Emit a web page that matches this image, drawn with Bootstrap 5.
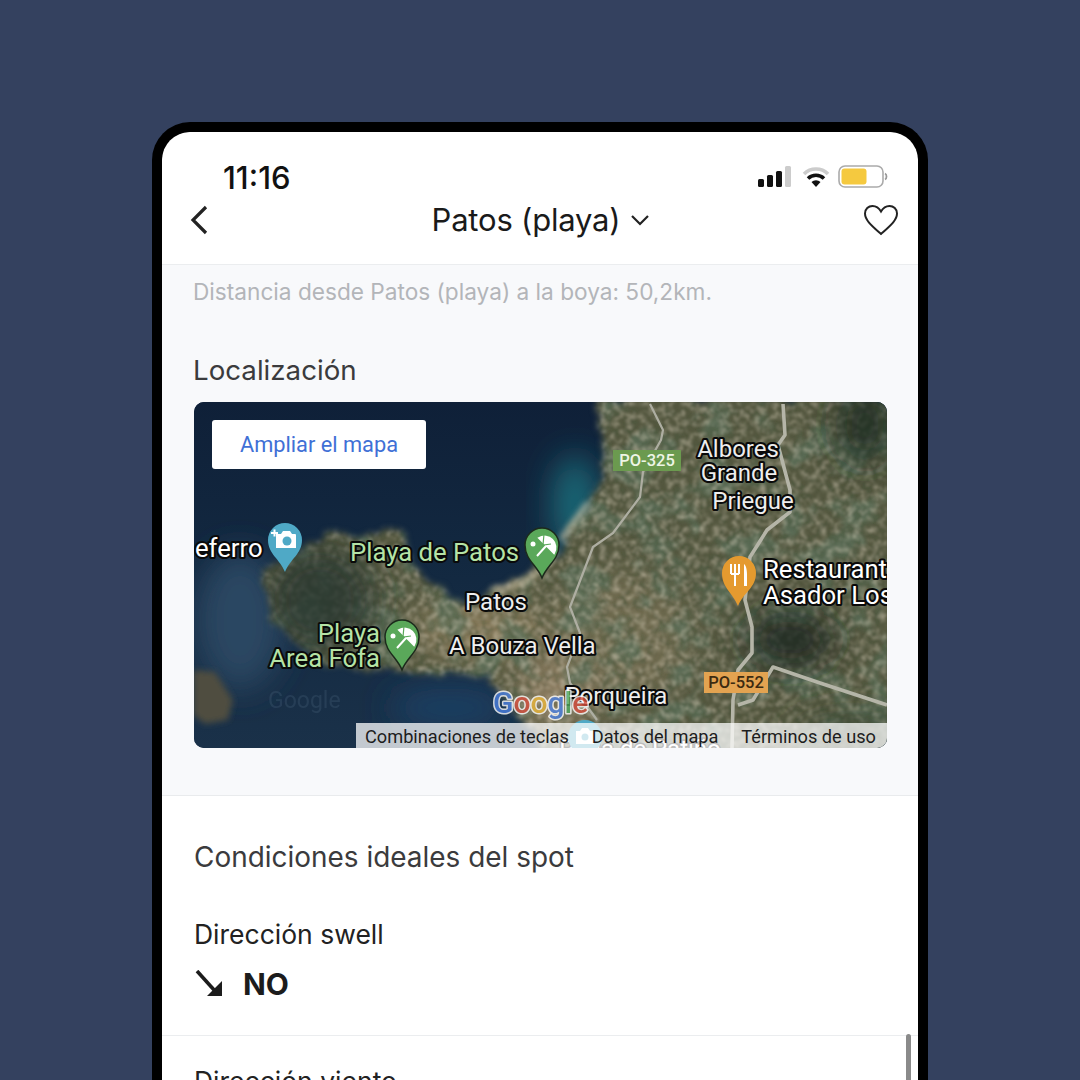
<!DOCTYPE html>
<html lang="es"><head><meta charset="utf-8"><title>Patos (playa)</title>
<link href="https://cdn.jsdelivr.net/npm/bootstrap@5.3.0/dist/css/bootstrap.min.css" rel="stylesheet">
<style>
html,body{height:1080px;overflow:hidden;background:#34415f}
body{font-family:Inter,"Liberation Sans",sans-serif;padding-top:122px}
.phone{width:776px;height:1000px;margin:0 auto;background:#000;border:10px solid #000;border-bottom:0;border-radius:38px 38px 0 0;overflow:hidden}
.screen{background:#fff;height:100%;border-radius:26px 26px 0 0;overflow:hidden;position:relative}
.statusline{height:55px;padding:24px 30px 0 61px}
.clock{font-size:31px;font-weight:500;line-height:44px;color:#111}
.navline{height:78px;padding:0 19px 12px 27px;border-bottom:1px solid #ebedef}
.navtitle{font-size:31px;line-height:44px;font-weight:400;color:#1a1a1a;letter-spacing:-.2px;gap:10px;margin-left:10px}
.greyzone{background:#f8f9fb;height:531px;padding:0 31px 0 32px;border-bottom:1px solid #e9ebed}
.distance{font-size:22.65px;line-height:54px;color:#b3b5b9;height:54px;margin-left:-1px}
.locate{font-size:27.7px;line-height:40px;color:#3b3b3d;margin-top:31px;margin-bottom:12px;font-weight:400;margin-left:-1px}
.mapbox{height:346px;border-radius:10px;overflow:hidden;position:relative;background:#14263d}
.mapbox svg{display:block}
.mapbtn{position:absolute;left:18px;top:18px;width:214px;height:49px;background:#fff;border-radius:3px;color:#3f70d6;font:400 21.8px/49px Roboto,sans-serif;padding:0;border:0;text-align:center}
.attrib{position:absolute;right:0;bottom:0;width:531px;height:25px;background:rgba(255,255,255,.74);font:400 18.2px/27px Roboto,sans-serif;color:#1d1d1d;padding:0 11px 0 9px;white-space:nowrap}
.sectitle{font-size:27.95px;line-height:40px;color:#3b3b3d;padding:41px 32px 0;margin:0;font-weight:400}
.factrow{padding:38px 32px 0;height:159px;border-bottom:1px solid #ebedef}
.factlabel{font-size:26.5px;line-height:38px;color:#222}
.factvalue{font-size:30px;font-weight:700;line-height:42px;color:#1c1c1c;gap:19px;margin-top:10px}
.factnext{padding:26px 32px 0}
.scrollthumb{position:absolute;right:7px;top:902px;width:5px;height:60px;background:#8a8a8a;border-radius:3px}
.maplabel{font-family:Roboto,sans-serif;font-size:25.7px;paint-order:stroke;stroke:#0a0a0a;stroke-width:4.2px;stroke-linejoin:round;fill:#fff}
.maplabel.green{fill:#b5e3a6}
.maplabel.village{font-size:24px;fill:#eee}
.shield{font-family:Roboto,sans-serif;font-size:16.5px;font-weight:500}
</style></head><body>
<div class="phone"><div class="screen">
  <div class="statusline d-flex justify-content-between align-items-start">
    <div class="clock">11:16</div>
    <svg width="130" height="26" viewBox="0 0 130 26" class="mt-2" aria-label="estado">
      <rect x="0" y="15" width="6" height="8" rx="1.5" fill="#111"/><rect x="9" y="11" width="6" height="12" rx="1.5" fill="#111"/><rect x="18" y="7" width="6" height="16" rx="1.5" fill="#111"/><rect x="27" y="2" width="6" height="21" rx="1.5" fill="#ccc"/>
      <path d="M46 10a17 17 0 0 1 24 0" fill="none" stroke="#ccc" stroke-width="3.6"/><path d="M50 14.5a11.5 11.5 0 0 1 16 0" fill="none" stroke="#111" stroke-width="3.6"/><path d="M53.5 18a6.5 6.5 0 0 1 9 0L58 23z" fill="#111"/>
      <rect x="81" y="2" width="44" height="21" rx="6" fill="#fff" stroke="#aaa" stroke-width="1.6"/><rect x="83.500" y="4.500" width="25" height="16" rx="3" fill="#f5c93f"/><path d="M127 9.500c2 1 2 5 0 6" fill="none" stroke="#999" stroke-width="1.800"/>
    </svg>
  </div>
  <div class="navline d-flex justify-content-between align-items-center">
    <svg width="20" height="30" viewBox="0 0 20 30" aria-label="Atrás"><path d="M17 2 4 15l13 13" fill="none" stroke="#222" stroke-width="3.200"/></svg>
    <div class="navtitle d-flex align-items-center">Patos (playa)
      <svg width="20" height="12" viewBox="0 0 20 12"><path d="m2 2 8 8 8-8" fill="none" stroke="#222" stroke-width="2.200"/></svg></div>
    <svg width="36" height="32" viewBox="0 0 36 32" aria-label="Favorito"><path d="M18 30C8 21 2 16 2 9.500 2 5 5.500 2 9.500 2c3.500 0 6.500 2 8.500 5.500C20 4 23 2 26.500 2 30.500 2 34 5 34 9.500 34 16 28 21 18 30z" fill="none" stroke="#222" stroke-width="2"/></svg>
  </div>
  <div class="greyzone">
    <div class="distance">Distancia desde Patos (playa) a la boya: 50,2km.</div>
    <div class="locate">Localización</div>
    <div class="mapbox">
      <svg width="693" height="346" viewBox="194 402 693 346" role="img" aria-label="Mapa de satélite">
        <defs>
          <filter id="coast" x="-5%" y="-5%" width="110%" height="110%"><feTurbulence type="fractalNoise" baseFrequency=".035" numOctaves="4" seed="3" result="warp"/><feDisplacementMap in="SourceGraphic" in2="warp" scale="30" xChannelSelector="R" yChannelSelector="G"/><feGaussianBlur stdDeviation="3"/></filter>
          <filter id="grain" x="0" y="0" width="100%" height="100%"><feTurbulence type="fractalNoise" baseFrequency=".11" numOctaves="4" seed="7"/><feColorMatrix values="0 0 0 0 .07  0 0 0 0 .10  0 0 0 0 .05  2.6 0 0 0 -1.05"/><feGaussianBlur stdDeviation="1" result="dark"/><feTurbulence type="fractalNoise" baseFrequency=".15" numOctaves="3" seed="21"/><feColorMatrix values="0 0 0 0 .78  0 0 0 0 .70  0 0 0 0 .56  2.4 0 0 0 -1.1"/><feGaussianBlur stdDeviation="1" result="light"/><feMerge><feMergeNode in="dark"/><feMergeNode in="light"/></feMerge></filter>
          <filter id="blotch" x="0" y="0" width="100%" height="100%"><feTurbulence type="fractalNoise" baseFrequency=".03" numOctaves="4" seed="12"/><feColorMatrix values="0 0 0 0 .10  0 0 0 0 .16  0 0 0 0 .10  5 0 0 0 -2.35"/><feGaussianBlur stdDeviation="1.5"/></filter>
          <filter id="soft" x="-30%" y="-30%" width="160%" height="160%"><feGaussianBlur stdDeviation="3"/></filter>
          <filter id="soft2" x="-60%" y="-60%" width="220%" height="220%"><feGaussianBlur stdDeviation="16"/></filter>
          <linearGradient id="seaG" x1="0" y1="0" x2="0" y2="1"><stop offset="0" stop-color="#0f2038"/><stop offset=".45" stop-color="#122840"/><stop offset="1" stop-color="#1a3149"/></linearGradient>
          <mask id="landmask" maskUnits="userSpaceOnUse" x="194" y="402" width="693" height="346"><path filter="url(#coast)" fill="#fff" d="M597 396 603 477 590 500 565 540 540 567 523 580 483 597 450 600 423 573 403 533 333 533 263 567 262 607 290 640 323 667 377 677 417 673 457 670 490 677 507 700 523 723 540 760H900V396z"/></mask>
        </defs>
        <rect x="194" y="402" width="693" height="346" fill="url(#seaG)"/>
        <ellipse cx="575" cy="505" rx="22" ry="50" fill="#1a6a78" filter="url(#soft2)"/>
        <ellipse cx="240" cy="620" rx="45" ry="70" fill="#2b4762" filter="url(#soft2)"/>
        <ellipse cx="450" cy="708" rx="60" ry="20" fill="#1c3f63" filter="url(#soft2)"/>
        <path d="M193 670 215 672 233 700 228 720 205 724 193 715z" fill="#4f4e3f" filter="url(#soft)"/>
        <g mask="url(#landmask)">
          <rect x="194" y="402" width="693" height="346" fill="#54573f"/>
          <ellipse cx="480" cy="630" rx="70" ry="28" fill="#92815f" opacity=".8" filter="url(#soft2)"/>
          <ellipse cx="620" cy="640" rx="70" ry="70" fill="#83785a" opacity=".55" filter="url(#soft2)"/>
          <ellipse cx="555" cy="695" rx="40" ry="40" fill="#9c876a" opacity=".75" filter="url(#soft2)"/>
          <rect x="194" y="402" width="693" height="346" filter="url(#blotch)" opacity=".75"/>
          <rect x="194" y="402" width="693" height="346" filter="url(#grain)" opacity=".5"/>
          <ellipse cx="320" cy="600" rx="55" ry="55" fill="#26352f" opacity=".8" filter="url(#soft2)"/>
          <ellipse cx="790" cy="640" rx="45" ry="30" fill="#14241c" opacity=".8" filter="url(#soft2)"/>
          <ellipse cx="865" cy="425" rx="30" ry="40" fill="#18261d" opacity=".8" filter="url(#soft2)"/>
          <ellipse cx="850" cy="735" rx="60" ry="22" fill="#2f3d2a" opacity=".6" filter="url(#soft2)"/>
        </g>
        <path d="M492 590C520 588 542 575 556 548M561 540 588 503" fill="none" stroke="#d9cdb0" stroke-width="5" opacity=".8" filter="url(#soft)"/>
        <g fill="none" stroke-linejoin="round">
          <path stroke="#aeaea2" stroke-width="2.200" d="M650 404 663 430 661 440 643 472 640 497 613 533 593 547 570 607 580 633 567 667 570 683 597 720"/>
          <path stroke="#b5b5a8" stroke-width="3.600" d="M783 404 785 435 778 445 790 490 790 512 767 530 750 557 745 600 752 627 752 653 738 670 733 700 732 748"/>
          <path stroke="#b5b5a8" stroke-width="3.600" d="M738 705 753 700 773 667 820 683 887 705"/>
        </g>
        <rect x="613" y="450" width="68" height="21" fill="#6b9a4f"/><text x="647" y="466" text-anchor="middle" class="shield" fill="#eef5e6">PO-325</text>
        <rect x="704" y="672" width="64" height="21" fill="#e3a351"/><text x="736" y="688" text-anchor="middle" class="shield" fill="#3c2a10">PO-552</text>

        <text class="maplabel village"><tspan x="738" y="457" text-anchor="middle">Albores</tspan><tspan x="739" y="481" text-anchor="middle">Grande</tspan></text>
        <text class="maplabel village" x="753" y="509" text-anchor="middle">Priegue</text>
        <text class="maplabel" x="763" y="578">Restaurant</text><text class="maplabel" x="763" y="604">Asador Los</text>
        <text class="maplabel" x="195" y="557">eferro</text>
        <text class="maplabel green" x="350" y="561">Playa de Patos</text>
        <text class="maplabel village" x="496" y="610" text-anchor="middle">Patos</text>
        <text class="maplabel village" x="449" y="654">A Bouza Vella</text>
        <text class="maplabel green" x="380" y="642" text-anchor="end">Playa</text><text class="maplabel green" x="380" y="667" text-anchor="end">Area Fofa</text>
        <text class="maplabel village" x="616" y="704" text-anchor="middle">Porqueira</text>
        <text x="493" y="713" font-family="Roboto,sans-serif" font-weight="500" font-size="30" stroke="#fff" stroke-width="3" paint-order="stroke" stroke-linejoin="round" opacity=".8"><tspan fill="#4a7fe0">G</tspan><tspan fill="#d8503f">o</tspan><tspan fill="#e9b53a">o</tspan><tspan fill="#4a7fe0">g</tspan><tspan fill="#4fa95e">l</tspan><tspan fill="#d8503f">e</tspan></text>
        <text x="268" y="708" font-family="Roboto,sans-serif" font-size="23" fill="#48627a" opacity=".3">Google</text>

        <!-- pins -->
        <g><path d="M285 572C280 559 268 554 268 540A17 17 0 1 1 302 540C302 554 290 559 285 572z" fill="#4fa9c6"/><path d="M276 534h5l2-3h7l2 3h3a1 1 0 0 1 1 1v13h-20z" fill="#fff"/><circle cx="287" cy="541" r="4.500" fill="#4fa9c6"/><path d="M271 533h7M274.500 529.500v7" stroke="#fff" stroke-width="2"/></g>
        <g><path d="M542 578C537 565 525 560 525 545A17 17 0 1 1 559 545C559 560 547 565 542 578z" fill="#5aa85a" stroke="#1c2a1c" stroke-width="1.500"/><path d="M539 538a11 11 0 0 1 15 15zM537 556l9-10" fill="#fff" stroke="#fff" stroke-width="2"/><path d="M544 534l-1 11 8-1" fill="none" stroke="#5aa85a" stroke-width="1.200"/><circle cx="533" cy="544" r="2.500" fill="#fff"/></g>
        <g><path d="M402 670C397 657 385 652 385 637A17 17 0 1 1 419 637C419 652 407 657 402 670z" fill="#5aa85a" stroke="#1c2a1c" stroke-width="1.500"/><path d="M399 630a11 11 0 0 1 15 15zM397 648l9-10" fill="#fff" stroke="#fff" stroke-width="2"/><path d="M404 626l-1 11 8-1" fill="none" stroke="#5aa85a" stroke-width="1.200"/><circle cx="393" cy="636" r="2.500" fill="#fff"/></g>
        <g><path d="M738 606C733 593 722 588 722 573A17 17 0 1 1 756 573C756 588 743 593 738 606z" fill="#e59a2f"/><path d="M731 564v10M735 564v22M739 564v10M731 574h8" stroke="#fff" stroke-width="2" fill="none"/><path d="M744 564c3 2 3 10 3 11v11h-3z" fill="#fff"/></g>
        <text x="640" y="757" font-family="Roboto,sans-serif" font-size="24" fill="#fff" stroke="#000" stroke-width="3" paint-order="stroke" text-anchor="middle">Praia de Patiño</text>
        <circle cx="585" cy="737" r="17" fill="#4fa9c6"/><path d="M576 731h4l2-3h6l2 3h4v13h-18z" fill="#fff"/><circle cx="585" cy="737" r="3.500" fill="#4fa9c6"/>
      </svg>
      <button type="button" class="btn mapbtn">Ampliar el mapa</button>
      <div class="attrib d-flex justify-content-between"><span>Combinaciones de teclas</span><span>Datos del mapa</span><span>Términos de uso</span></div>
    </div>
  </div>
  <h2 class="sectitle">Condiciones ideales del spot</h2>
  <div class="factrow">
    <div class="factlabel">Dirección swell</div>
    <div class="factvalue d-flex align-items-center">
      <svg width="30" height="28" viewBox="0 0 30 28" aria-label="Noroeste"><path d="M3 1 21 21" fill="none" stroke="#1c1c1c" stroke-width="3.600"/><path d="M28 26H13L28 11z" fill="#1c1c1c"/></svg>NO</div>
  </div>
  <div class="factnext factlabel">Dirección viento</div>
  <div class="scrollthumb"></div>
</div></div>
<script src="https://cdn.jsdelivr.net/npm/bootstrap@5.3.0/dist/js/bootstrap.bundle.min.js"></script>
</body></html>
